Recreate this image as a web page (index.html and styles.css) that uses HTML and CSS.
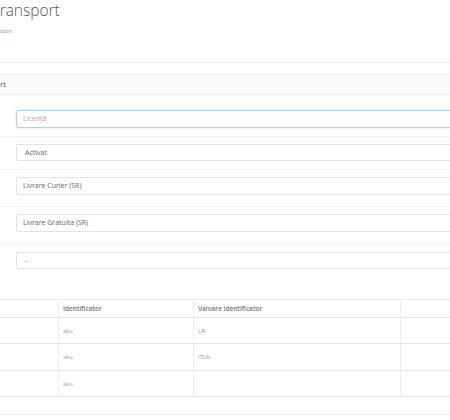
FILE: index.html
```html
<!DOCTYPE html>
<html>
<head>
<meta charset="utf-8">
<link rel="stylesheet" href="styles.css">
</head>
<body>
<div class="page">
  <div class="header">
    <h1 class="title">Transport</h1>
    <div class="crumb">Transport</div>
  </div>
  <div class="rule"></div>
  <div class="panel">
    <div class="panel-heading"><span class="cut">Transport</span></div>
    <div class="form">
      <div class="group g1"><div class="input focus placeholder">Licență</div></div>
      <div class="group g2"><div class="input select">Activat</div></div>
      <div class="group g3"><div class="input">Livrare Curier (SR)</div></div>
      <div class="group g4"><div class="input">Livrare Gratuita (SR)</div></div>
      <div class="group g5 last"><div class="input select">-</div></div>
    </div>
    <table class="grid">
      <thead>
        <tr><th class="c1"></th><th class="c2">Identificator</th><th class="c3">Valoare identificator</th><th class="c4"></th></tr>
      </thead>
      <tbody>
        <tr><td class="c1"></td><td class="c2">sku</td><td class="c3">LR-</td><td class="c4"></td></tr>
        <tr class="r2"><td class="c1"></td><td class="c2">sku</td><td class="c3">ITLK-</td><td class="c4"></td></tr>
        <tr><td class="c1"></td><td class="c2">sku</td><td class="c3"></td><td class="c4"></td></tr>
      </tbody>
    </table>
    <div class="footer-rule"></div>
  </div>
</div>
</body>
</html>
```

FILE: styles.css
```css
html, body {
  margin: 0;
  padding: 0;
  background: #fff;
}
body {
  width: 450px;
  height: 420px;
  overflow: hidden;
  font-family: "Open Sans", "DejaVu Sans", sans-serif;
  color: #555;
}
.page {
  width: 450px;
  overflow: hidden;
}
.header {
  height: 62px;
  overflow: hidden;
}
.title {
  margin: 0 0 0 -8.5px;
  padding: 0;
  font-size: 15.5px;
  line-height: 20px;
  font-weight: 300;
  color: #555;
  white-space: nowrap;
}
.crumb {
  margin: 6px 0 0 -10.6px;
  font-size: 5px;
  line-height: 10px;
  color: #6a9ad3;
  white-space: nowrap;
}
.rule {
  border-top: 1px solid #ececec;
  height: 11px;
}
.panel {
  border-top: 1px solid #efefef;
}
.panel-heading {
  height: 19px;
  background: #fafafa;
  border-bottom: 1px solid #efefef;
  font-size: 7.3px;
  line-height: 19px;
  color: #555;
  overflow: hidden;
  white-space: nowrap;
}
.cut {
  margin-left: -27.5px;
}
.group {
  border-bottom: 1px solid #f4f4f4;
  padding: 7px 0 0 16px;
}
.g1 { padding-top: 15px; height: 26px; }
.g2 { height: 25px; }
.g3 { height: 29px; }
.g4 { height: 29px; }
.g5 { border-bottom: none; height: 47px; padding-top: 8px; }
.input {
  box-sizing: border-box;
  width: 460px;
  height: 18px;
  border: 1px solid #e3e3e3;
  border-radius: 2px;
  padding-left: 6px;
  font-size: 7px;
  line-height: 16px;
  color: #666;
  white-space: nowrap;
}
.g2 .input, .g5 .input { height: 17px; line-height: 15px; }
.input.select { padding-left: 8px; }
.input.focus {
  border-color: #b3d0ef;
  box-shadow: 0 0 2px rgba(102, 160, 225, 0.45);
}
.input.placeholder { color: #aaa; }
.grid {
  border-collapse: collapse;
  table-layout: fixed;
  width: 460px;
  font-size: 6px;
  color: #999;
}
.grid th, .grid td {
  text-align: left;
  padding: 0 0 0 4px;
  border-left: 1px solid #eee;
  white-space: nowrap;
}
.grid th {
  height: 17px;
  font-size: 6.5px;
  font-weight: 600;
  color: #777;
  border-top: 1px solid #ececec;
  border-bottom: 1px solid #e2e2e2;
}
.grid td {
  height: 25px;
  border-bottom: 1px solid #e6e6e6;
}
.grid .r2 td { height: 26px; }
.grid .c1 { width: 54px; border-left: none; }
.grid .c2 { width: 130px; }
.grid .c3 { width: 202px; }
.grid .c4 { width: 70px; }
.footer-rule {
  margin-top: 17px;
  border-top: 1px solid #f0f0f0;
}
```
